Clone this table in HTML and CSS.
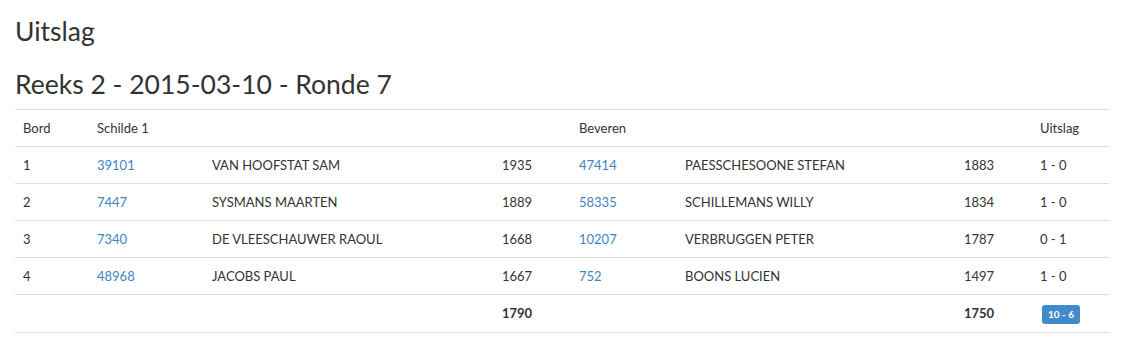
FILE: index.html
```html
<!DOCTYPE html>
<html lang="nl">
<head>
<meta charset="utf-8">
<title>Uitslag</title>
<link rel="stylesheet" href="styles.css">
</head>
<body>
<div class="container">
  <h2 class="title">Uitslag</h2>
  <h2 class="subtitle">Reeks 2 - 2015-03-10 - Ronde 7</h2>
  <table class="results">
    <colgroup>
      <col class="c-bord"><col class="c-nr"><col class="c-name"><col class="c-elo">
      <col class="c-nr2"><col class="c-name2"><col class="c-elo2"><col class="c-res">
    </colgroup>
    <thead>
      <tr><th>Bord</th><th>Schilde 1</th><th></th><th></th><th>Beveren</th><th></th><th></th><th>Uitslag</th></tr>
    </thead>
    <tbody>
      <tr><td>1</td><td><a href="#">39101</a></td><td>VAN HOOFSTAT SAM</td><td>1935</td><td><a href="#">47414</a></td><td>PAESSCHESOONE STEFAN</td><td>1883</td><td>1 - 0</td></tr>
      <tr><td>2</td><td><a href="#">7447</a></td><td>SYSMANS MAARTEN</td><td>1889</td><td><a href="#">58335</a></td><td>SCHILLEMANS WILLY</td><td>1834</td><td>1 - 0</td></tr>
      <tr><td>3</td><td><a href="#">7340</a></td><td>DE VLEESCHAUWER RAOUL</td><td>1668</td><td><a href="#">10207</a></td><td>VERBRUGGEN PETER</td><td>1787</td><td>0 - 1</td></tr>
      <tr><td>4</td><td><a href="#">48968</a></td><td>JACOBS PAUL</td><td>1667</td><td><a href="#">752</a></td><td>BOONS LUCIEN</td><td>1497</td><td>1 - 0</td></tr>
      <tr class="total"><td></td><td></td><td></td><td><strong>1790</strong></td><td></td><td></td><td><strong>1750</strong></td><td><span class="badge">10 - 6</span></td></tr>
    </tbody>
  </table>
</div>
</body>
</html>
```

FILE: styles.css
```css
* { box-sizing: border-box; }
html, body { margin: 0; padding: 0; background: #fff; }
body {
  font-family: "Lato", "Open Sans", sans-serif;
  font-size: 13px;
  line-height: 20px;
  color: #333;
}
.container { padding: 0 15px; }
h2 {
  font-family: "Lato", sans-serif;
  font-weight: 400;
  font-size: 26.5px;
  line-height: 33px;
  margin: 0;
  color: #333;
}
.title { padding-top: 15px; }
.subtitle { padding-top: 20px; padding-bottom: 8px; }
.results {
  width: 100%;
  border-collapse: collapse;
  table-layout: fixed;
  border-top: 1px solid #ddd;
}
.results th, .results td {
  padding: 8px;
  text-align: left;
  vertical-align: top;
  border-bottom: 1px solid #ddd;
  white-space: nowrap;
}
.results th { font-weight: 400; }
.c-bord { width: 74px; }
.c-nr { width: 115px; }
.c-name { width: 290px; }
.c-elo { width: 77px; }
.c-nr2 { width: 106px; }
.c-name2 { width: 279px; }
.c-elo2 { width: 76px; }
.c-res { width: 77px; }
a { color: #3f84c4; text-decoration: none; }
strong { font-weight: 700; }
.badge {
  display: inline-block;
  background: #428bca;
  color: #fff;
  font-size: 10px;
  font-weight: 700;
  line-height: 13px;
  padding: 3px 6px;
  border-radius: 3px;
  margin-left: 2px;
  vertical-align: 0;
}
```
